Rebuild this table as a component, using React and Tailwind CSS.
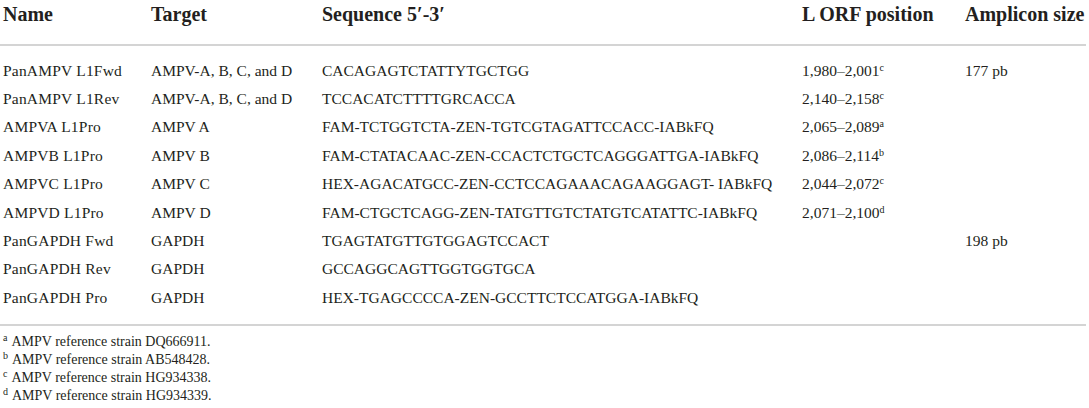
import React from 'react';

const rows = [
  ['PanAMPV L1Fwd', 'AMPV-A, B, C, and D', 'CACAGAGTCTATTYTGCTGG', '1,980–2,001', 'c', '177 pb'],
  ['PanAMPV L1Rev', 'AMPV-A, B, C, and D', 'TCCACATCTTTTGRCACCA', '2,140–2,158', 'c', ''],
  ['AMPVA L1Pro', 'AMPV A', 'FAM-TCTGGTCTA-ZEN-TGTCGTAGATTCCACC-IABkFQ', '2,065–2,089', 'a', ''],
  ['AMPVB L1Pro', 'AMPV B', 'FAM-CTATACAAC-ZEN-CCACTCTGCTCAGGGATTGA-IABkFQ', '2,086–2,114', 'b', ''],
  ['AMPVC L1Pro', 'AMPV C', 'HEX-AGACATGCC-ZEN-CCTCCAGAAACAGAAGGAGT- IABkFQ', '2,044–2,072', 'c', ''],
  ['AMPVD L1Pro', 'AMPV D', 'FAM-CTGCTCAGG-ZEN-TATGTTGTCTATGTCATATTC-IABkFQ', '2,071–2,100', 'd', ''],
  ['PanGAPDH Fwd', 'GAPDH', 'TGAGTATGTTGTGGAGTCCACT', '', '', '198 pb'],
  ['PanGAPDH Rev', 'GAPDH', 'GCCAGGCAGTTGGTGGTGCA', '', '', ''],
  ['PanGAPDH Pro', 'GAPDH', 'HEX-TGAGCCCCA-ZEN-GCCTTCTCCATGGA-IABkFQ', '', '', ''],
];

const notes = [
  ['a', 'AMPV reference strain DQ666911.'],
  ['b', 'AMPV reference strain AB548428.'],
  ['c', 'AMPV reference strain HG934338.'],
  ['d', 'AMPV reference strain HG934339.'],
];

const cols = 'grid grid-cols-[148px_171px_480px_163px_1fr] pl-[3px]';

export default function App() {
  return (
    <div className="w-[1089px] h-[408px] bg-white text-[#231f20] font-['Liberation_Serif',serif]">
      {/* header */}
      <div className={`${cols} h-[44px] pt-[1px] text-[20px] font-bold leading-[26px]`}>
        <div>Name</div>
        <div>Target</div>
        <div>Sequence 5′-3′</div>
        <div>L ORF position</div>
        <div>Amplicon size</div>
      </div>
      <div className="w-[1086px] h-[2px] bg-[#d4d4d4]" />

      {/* body */}
      <div className="pt-[10px] pb-[12px] text-[15.5px]">
        {rows.map((r, i) => (
          <div key={i} className={`${cols} h-[28.4px] items-center`}>
            <div className="tracking-[0.2px]">{r[0]}</div>
            <div>{r[1]}</div>
            <div>{r[2]}</div>
            <div>
              {r[3]}
              {r[4] && <sup className="text-[10px]">{r[4]}</sup>}
            </div>
            <div>{r[5]}</div>
          </div>
        ))}
      </div>
      <div className="w-[1086px] h-[2px] bg-[#d4d4d4]" />

      {/* footnotes */}
      <div className="pt-[7px] pl-[3px] text-[14px]">
        {notes.map(([k, t]) => (
          <div key={k} className="h-[18px] leading-[18px]">
            <sup className="text-[10px] mr-[4px]">{k}</sup>
            {t}
          </div>
        ))}
      </div>
    </div>
  );
}
